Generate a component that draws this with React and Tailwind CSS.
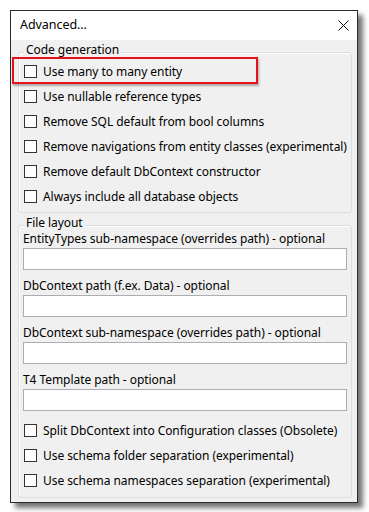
const codeOptions = [
  "Use many to many entity",
  "Use nullable reference types",
  "Remove SQL default from bool columns",
  "Remove navigations from entity classes (experimental)",
  "Remove default DbContext constructor",
  "Always include all database objects",
];

const pathFields = [
  "EntityTypes sub-namespace (overrides path) - optional",
  "DbContext path (f.ex. Data) - optional",
  "DbContext sub-namespace (overrides path) - optional",
  "T4 Template path - optional",
];

const layoutOptions = [
  "Split DbContext into Configuration classes (Obsolete)",
  "Use schema folder separation (experimental)",
  "Use schema namespaces separation (experimental)",
];

function Check({ label }) {
  return (
    <label className="flex h-[25px] items-center gap-[6px]">
      <span className="h-[13px] w-[13px] shrink-0 border border-[#333333] bg-white" />
      <span className="whitespace-nowrap">{label}</span>
    </label>
  );
}

function GroupBox({ title, className, children }) {
  return (
    <div
      className={`relative ml-[7px] mr-[5px] rounded-[3px] border border-[#d5dfe5] shadow-[inset_1px_1px_0_#ffffff] ${className}`}
    >
      <span className="absolute left-[5px] top-[-9px] bg-[#f0f0f0] px-[2px] leading-[12px]">{title}</span>
      {children}
    </div>
  );
}

export default function App() {
  return (
    <div className="h-[512px] w-[369px] bg-white pl-[10px] pt-[10px] font-['Segoe_UI','Noto_Sans',sans-serif] text-[12px] tracking-[-0.06px] text-black">
      <div className="relative w-[348px] border border-[#2b2b2b] bg-[#f0f0f0] shadow-[5px_5px_5px_rgba(0,0,0,0.55)]">
        <div className="flex h-[29px] items-center justify-between bg-white pl-[9px] pr-[8px]">
          <span className="text-[12.5px]">Advanced...</span>
          <svg width="11" height="11" viewBox="0 0 11 11">
            <path d="M0.5 0.5 L10.5 10.5 M10.5 0.5 L0.5 10.5" stroke="#111" strokeWidth="1" fill="none" />
          </svg>
        </div>

        <GroupBox title="Code generation" className="mt-[12px] pb-[3px] pl-[5px] pt-[6px]">
          {codeOptions.map((o) => (
            <Check key={o} label={o} />
          ))}
        </GroupBox>

        <GroupBox title="File layout" className="mb-[4px] mt-[12px] pb-[4px] pl-[4px] pr-[4px] pt-[5px]">
          <div className="flex flex-col gap-[8px]">
            {pathFields.map((f) => (
              <div key={f}>
                <div className="h-[16px] leading-[16px] whitespace-nowrap">{f}</div>
                <div className="mt-[1px] h-[22px] w-full border border-[#abadb3] bg-white" />
              </div>
            ))}
          </div>
          <div className="mt-[7px] pl-[1px]">
            {layoutOptions.map((o) => (
              <Check key={o} label={o} />
            ))}
          </div>
        </GroupBox>

        <div className="absolute left-[1px] top-[46px] h-[27px] w-[246px] border-2 border-[#e5141b] shadow-[1px_2px_2px_rgba(0,0,0,0.3)]" />
      </div>
    </div>
  );
}
